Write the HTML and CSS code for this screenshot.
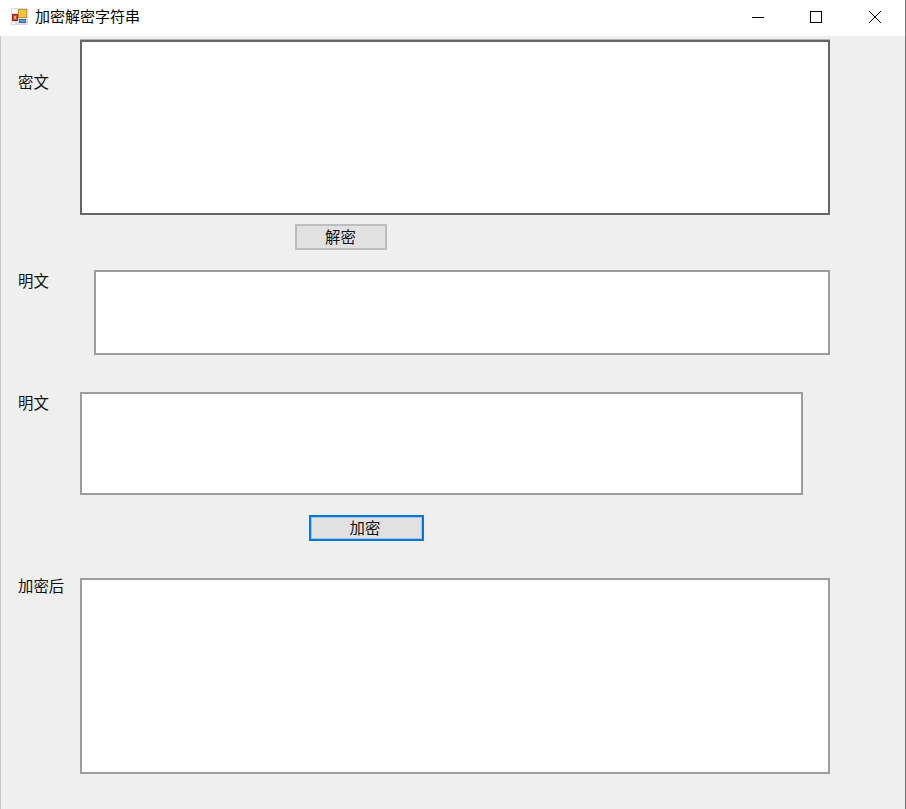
FILE: index.html

```html
<!DOCTYPE html>
<html lang="zh-CN">
<head>
  <meta charset="UTF-8">
  <title>加密解密字符串</title>
  <link rel="stylesheet" href="styles.css">
</head>
<body>
  <div class="window">
    <div class="titlebar">
      <svg class="app-icon" width="17" height="17" viewBox="0 0 17 17">
        <rect x="0" y="0" width="17" height="17" fill="#dcdcdc"/>
        <rect x="1" y="1" width="5" height="4" fill="#fff"/>
        <rect x="1" y="14" width="3" height="2" fill="#fff"/>
        <rect x="7.5" y="1.5" width="8" height="8" fill="#f6c544" stroke="#c99a30"/>
        <rect x="1.5" y="6.5" width="5" height="6" fill="#d9412f" stroke="#8f2a22"/>
        <rect x="3" y="8" width="2" height="3" fill="#f09a86"/>
        <rect x="8.5" y="11.5" width="6" height="3" fill="#5b93e0" stroke="#3d6fb8"/>
      </svg>
      <span class="title">加密解密字符串</span>
      <div class="controls">
        <div class="control">
          <svg width="12" height="12" viewBox="0 0 12 12"><path d="M0 6.5H12" stroke="#000" fill="none"/></svg>
        </div>
        <div class="control">
          <svg width="12" height="12" viewBox="0 0 12 12"><rect x="0.5" y="0.5" width="11" height="11" stroke="#000" fill="none"/></svg>
        </div>
        <div class="control control-close">
          <svg width="12" height="12" viewBox="0 0 12 12"><path d="M0 0L12 12M12 0L0 12" stroke="#000" fill="none"/></svg>
        </div>
      </div>
    </div>

    <div class="form">
      <div class="row row-cipher">
        <label class="label">密文</label>
        <div class="box box-cipher"></div>
      </div>
      <button class="btn btn-decrypt">解密</button>
      <div class="row row-plain">
        <label class="label">明文</label>
        <div class="box box-plain"></div>
      </div>
      <div class="row row-input">
        <label class="label">明文</label>
        <div class="box box-input"></div>
      </div>
      <button class="btn btn-encrypt">加密</button>
      <div class="row row-output">
        <label class="label">加密后</label>
        <div class="box box-output"></div>
      </div>
    </div>
  </div>
</body>
</html>
```

FILE: styles.css

```css
html, body { margin: 0; padding: 0; }
body {
  width: 906px;
  height: 809px;
  overflow: hidden;
  background: #efefef;
  font-family: "Noto Sans CJK SC", "Liberation Sans", sans-serif;
  color: #111;
}
.window {
  box-sizing: border-box;
  height: 809px;
  border-right: 1px solid #777;
  border-left: 1px solid #c8c8c8;
  display: flex;
  flex-direction: column;
}

.titlebar {
  height: 36px;
  flex: none;
  background: #fff;
  display: flex;
  align-items: center;
  padding-left: 11px;
  margin-left: -1px;
}
.app-icon { margin-top: -4px; }
.title { font-size: 15px; margin-left: 7px; margin-top: -6px; color: #000; }
.controls { margin-left: auto; display: flex; margin-top: -2px; }
.control {
  width: 58px;
  display: flex;
  justify-content: center;
  align-items: center;
}
.control-close { width: 60px; }

.form { padding-top: 4px; }
.row { display: flex; align-items: flex-start; }
.label {
  width: 79px;
  padding-left: 17px;
  box-sizing: border-box;
  font-size: 15.4px;
  line-height: 20px;
  flex: none;
}
.box {
  box-sizing: border-box;
  background: #fff;
  border: 2px solid #9d9d9d;
}

.box-cipher { width: 750px; height: 175px; border-color: #666; box-shadow: 0 -1px 0 #b4b4b4; }
.row-cipher .label { padding-top: 31px; }

.btn {
  display: block;
  box-sizing: border-box;
  height: 26px;
  padding: 0 1px 3px 0;
  background: #e1e1e1;
  border: 2px solid #bdbdbd;
  font-family: inherit;
  font-size: 15.4px;
  line-height: 20px;
  color: #111;
}
.btn-decrypt { width: 92px; margin: 9px 0 20px 294px; }
.btn-encrypt { width: 115px; margin: 20px 0 37px 308px; border-color: #0078d7; box-shadow: inset 0 0 0 1px #9ccaee; padding-right: 3px; }

.row-plain .label { padding-top: 0; width: 93px; }
.box-plain { width: 736px; height: 85px; }

.row-input { margin-top: 37px; }
.row-input .label { padding-top: 0; }
.box-input { width: 723px; height: 103px; }

.row-output .label { margin-top: -3px; }
.box-output { width: 750px; height: 196px; }
```
